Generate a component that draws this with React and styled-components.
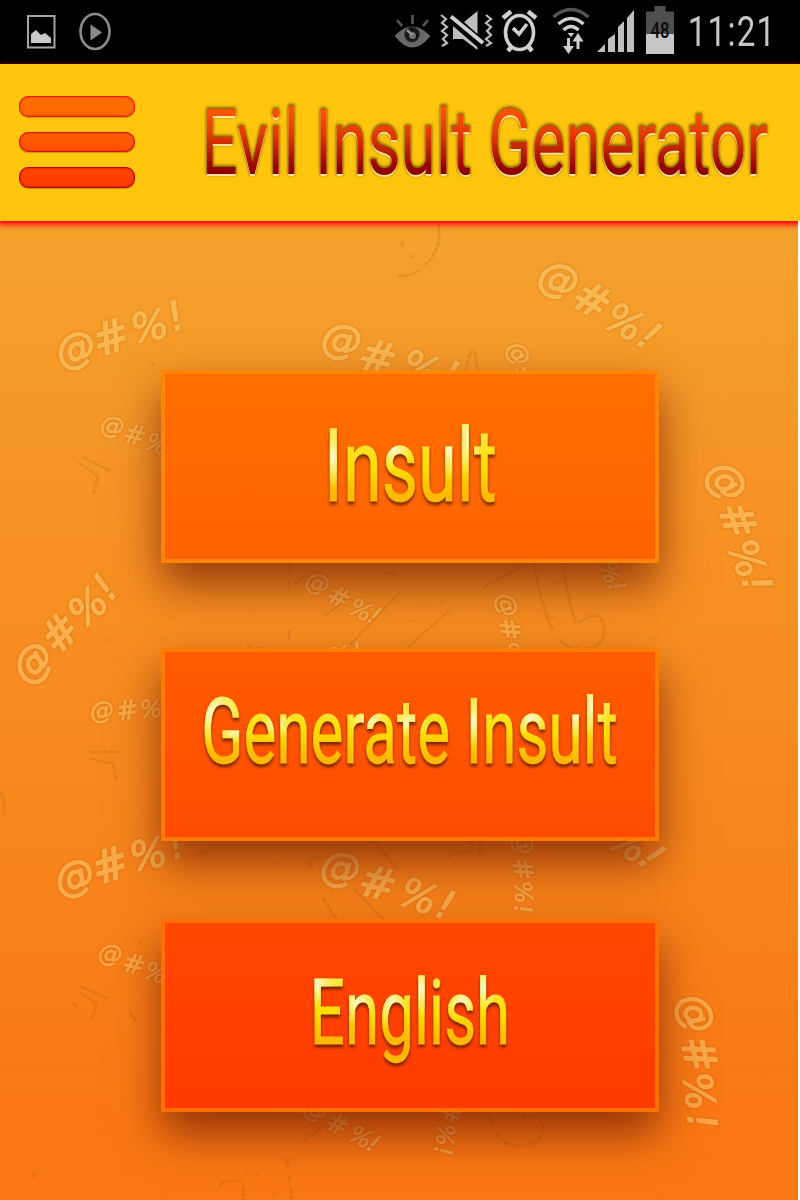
import React from 'react';
import styled, { createGlobalStyle } from 'styled-components';

const GlobalStyle = createGlobalStyle`
  * { box-sizing: border-box; }
  body { margin: 0; background: #fff; }
`;

const Screen = styled.div`
  position: relative;
  z-index: 0;
  width: 800px;
  height: 1200px;
  overflow: hidden;
  display: flex;
  flex-direction: column;
  font-family: Roboto, 'Liberation Sans', sans-serif;
  background: linear-gradient(#f4a22d 220px, #f79325 500px, #f7861c 820px, #fa7814 1120px, #f97813 1200px);
`;

const StatusBar = styled.header`
  height: 64px;
  flex: none;
  display: flex;
  justify-content: space-between;
  background: #000;
`;

const StatusGroup = styled.div`
  display: flex;
`;

const StatusIcons = styled.svg`
  display: block;
  flex: none;
`;

const Clock = styled.div`
  width: 112px;
  display: flex;
  justify-content: center;
  align-items: center;
  color: #c6c6c6;
  font-size: 42px;
  line-height: 64px;
  padding: 0 24px 0 0;
`;

const ClockText = styled.span`
  flex: none;
  font-weight: 400;
  letter-spacing: 1.5px;
  transform: scaleX(0.79);
`;

const AppBar = styled.div`
  position: relative;
  height: 157px;
  flex: none;
  display: flex;
  align-items: center;
  padding: 0 0 1px 19px;
  background: #ffc60d;
  box-shadow: 0 3px 6px 1px #ff1212, 0 2px 2px #f92210;
`;

const MenuButton = styled.button`
  width: 116px;
  padding: 0;
  border: 0;
  background: none;
  display: flex;
  flex-direction: column;
  gap: 15px;
  flex: none;
`;

const MenuBar = styled.span`
  height: 20.5px;
  border-radius: 9px;
  border: 1px solid ${(p) => p.$edge};
  background: linear-gradient(${(p) => p.$from}, ${(p) => p.$to});
  box-shadow: inset 0 0 2px ${(p) => p.$edge}, 0 1px 1px rgba(150, 90, 0, 0.45);
`;

const TitleBox = styled.h1`
  margin: 1px 0 0 35px;
  width: 630px;
  display: flex;
  justify-content: center;
  filter: drop-shadow(0 2px 0.4px #ffe39a) drop-shadow(0 -1px 1px rgba(110, 85, 0, 0.8))
    drop-shadow(0 -1px 1.5px rgba(120, 95, 0, 0.7));
`;

const TitleText = styled.span`
  flex: none;
  white-space: nowrap;
  font-weight: 400;
  font-size: 91.5px;
  line-height: 110px;
  color: transparent;
  background: linear-gradient(#ff5500 20%, #e23b00 42%, #8f0000 75%);
  background-clip: text;
  -webkit-background-clip: text;
  transform: scaleX(0.698);
`;

const Actions = styled.main`
  padding: 149px 0 0 161px;
  display: flex;
  flex-direction: column;
  align-items: flex-start;
`;

const ActionButton = styled.button`
  width: 498px;
  height: 193px;
  margin: 0 0 ${(p) => p.$after}px;
  padding: 4px;
  border: 0;
  display: flex;
  font-family: inherit;
  background: ${(p) => p.$edge};
  box-shadow: 0 22px 42px rgba(110, 24, 0, 0.72);
`;

const Face = styled.span`
  flex: 1;
  height: 185px;
  min-width: 0;
  display: flex;
  justify-content: center;
  align-items: center;
  padding-bottom: ${(p) => p.$lift}px;
  background: linear-gradient(${(p) => p.$from}, ${(p) => p.$to});
`;

const LabelBox = styled.span`
  width: 480px;
  display: flex;
  justify-content: center;
  filter: drop-shadow(0 3px 1.5px rgba(80, 25, 0, 0.75));
`;

const Label = styled.span`
  flex: none;
  white-space: nowrap;
  font-size: ${(p) => p.$size}px;
  line-height: 1.2;
  color: transparent;
  background: ${(p) => p.$glints
    .map(([x, y, w, h]) => `radial-gradient(${w}% ${h}% at ${x}% ${y}%, #fff8d0 0%, rgba(255,240,120,0.7) 55%, rgba(255,225,0,0) 100%)`)
    .join(', ')}, linear-gradient(#ffe640 22%, #ffde00 50%, #ffb700 75%);
  background-clip: text;
  -webkit-background-clip: text;
  -webkit-text-stroke: 0.8px transparent;
  transform: scaleX(${(p) => p.$narrow});
`;

const Backdrop = styled.svg`
  position: absolute;
  left: 0;
  top: 0;
  z-index: -1;
  pointer-events: none;
`;

const CurseGroup = styled.g`
  opacity: ${(p) => p.$strength};
  filter: drop-shadow(0 0 1px rgba(150, 60, 0, 0.9));
`;

const Curse = styled.text`
  font-family: 'DejaVu Sans', sans-serif;
  font-style: italic;
  font-size: ${(p) => p.$size}px;
  fill: #fdd277;
  stroke: #fdd277;
  stroke-width: ${(p) => p.$size * 0.04}px;
  stroke-linejoin: round;
  text-anchor: middle;
`;

const RightEdge = styled.div`
  position: absolute;
  right: 0;
  top: 221px;
  bottom: 0;
  width: 2px;
  background: #fff;
`;

// Each entry: font size followed by [index in "@#%!", centre x, centre y, angle]
const curses = [
  [40, [0, 76, 351, -20], [1, 111, 337, -18], [2, 149, 325, -10], [3, 175, 315, -20]],
  [40, [0, 558, 281, 20], [1, 592, 300, 30], [2, 625, 321, 28], [3, 650, 335, 35]],
  [40, [0, 341, 342, 8], [1, 378, 357, 15], [2, 421, 367, 20], [3, 450, 374, 20]],
  [24, [0, 112, 427, 8], [1, 135, 435, 14], [2, 157, 443, 20]],
  [40, [0, 725, 482, 50], [1, 738, 520, 72], [2, 748, 558, 68], [3, 758, 583, 78]],
  [40, [0, 34, 664, -45], [1, 60, 633, -45], [2, 87, 606, -40], [3, 104, 586, -48]],
  [24, [0, 102, 712, -8], [1, 127, 710, -6], [2, 151, 708, -2]],
  [24, [0, 317, 584, 20], [1, 339, 597, 25], [2, 361, 609, 28], [3, 375, 615, 30]],
  [24, [2, 339, 655, -8], [3, 357, 651, -10]],
  [24, [0, 506, 605, 70], [1, 510, 629, 80], [2, 511, 653, 80]],
  [24, [0, 517, 354, 50], [1, 523, 376, 65]],
  [24, [2, 611, 572, 70], [3, 618, 586, 72]],
  [40, [0, 75, 879, -20], [1, 110, 865, -18], [2, 148, 853, -10], [3, 175, 843, -20]],
  [40, [0, 340, 870, 8], [1, 378, 883, 15], [2, 419, 895, 20], [3, 446, 904, 20]],
  [24, [0, 110, 955, 8], [1, 134, 964, 14], [2, 156, 972, 20]],
  [24, [0, 522, 843, 65], [1, 523, 869, 80], [2, 524, 892, 85], [3, 524, 909, 86]],
  [40, [2, 629, 842, 30], [3, 653, 856, 45]],
  [40, [0, 694, 1014, 65], [1, 699, 1054, 78], [2, 700, 1091, 82], [3, 703, 1121, 85]],
  [24, [0, 315, 1111, 20], [1, 338, 1124, 25], [2, 361, 1136, 28], [3, 374, 1143, 30]],
  [24, [1, 450, 1112, 100], [2, 446, 1135, 95], [3, 444, 1151, 94]],
];

const scratches = [
  'M428 208l2 3M437 217q8 30-12 48M420 270q-10 6-22 6M401 246l3-4M412 258l2-3',
  'M83 457L110 471M79 463L98 476L93 495M151 365l3-1M592 348v1',
  'M466 371q3-22 8-20M475 352l3 21',
  'M290 563v10M289 579v13M289 630v12M293 585L310 572M325 616L345 600M350 645L400 592',
  'M247 647h3M256 648h5M277 631h1M107 640h2M407 648L450 610M386 575q5-6 8 2M411 620v2M423 605h2M441 602h3',
  'M483 588L533 560M534 563Q541 605 553 630M562 563Q568 600 576 623M552 617v2M578 623Q600 608 604 625Q607 649 580 649Q564 647 558 638M557 582l2 3',
  'M90 752H122M90 758Q100 762 113 763L116 780M0 793Q6 796 4 814',
  'M374 841L398 870M330 846h8M312 868q-8-12 8-10M197 855l10-4M278 865l3-2M323 898L338 922M354 889L385 921M150 893h2',
  'M80 986L109 999M78 991L97 1004L91 1020M73 1003l4 4M130 1012l6 10M139 940l2 4',
  'M448 857q10-6 23-5V837M480 837V861M595 856h2',
  'M303 1142L325 1124M288 1110v10M288 1157v12M289 1176v7M291 1188v12M221 1187v-6h21M243 1186v14M34 1172v6M276 1159v1M246 1174h2M256 1175h2M268 1175h2M272 1194h2',
  'M489 1110q0 12 4 15M496 1133Q506 1147 520 1146Q544 1144 543 1126Q538 1112 519 1118',
];

const actions = [
  { label: 'Insult', size: 102.7, narrow: 0.685, lift: 0, after: 85, from: '#ff6e00', to: '#ff6200', edge: 'rgba(255, 130, 0, 0.86)',
    glints: [[5, 42, 9, 25], [40, 36, 12, 18], [73, 36, 9, 26], [84, 28, 8, 34]] },
  { label: 'Generate Insult', size: 91.5, narrow: 0.677, lift: 26, after: 78, from: '#ff5c00', to: '#ff4b00', edge: 'rgba(255, 120, 0, 0.86)',
    glints: [[3, 33, 7, 30], [8, 50, 4, 12], [18, 43, 4, 15], [40, 39, 5, 18], [50, 42, 5, 14], [65, 41, 4, 24], [79, 38, 5, 16], [90, 35, 4, 24], [94, 27, 4, 30]] },
  { label: 'English', size: 91.5, narrow: 0.677, lift: 5, after: 0, from: '#ff4800', to: '#ff3a00', edge: 'rgba(255, 110, 0, 0.86)',
    glints: [[3, 24, 10, 20], [24, 40, 10, 20], [41, 42, 8, 24], [56, 28, 8, 26], [76, 40, 9, 16], [87, 27, 7, 22]] },
];

function Doodles() {
  return (
    <Backdrop width="800" height="1200" viewBox="0 0 800 1200" aria-hidden="true">
      <g fill="none" stroke="rgba(130,70,10,0.17)" strokeWidth="2.6" strokeDasharray="6 1 4 1">
        {scratches.map((d) => <path key={d} d={d} />)}
      </g>
      {curses.map(([size, ...marks]) => (
        <CurseGroup key={`${marks[0][1]}-${marks[0][2]}`} $strength={size > 30 ? 0.5 : 0.45}>
          {marks.map(([i, x, y, r]) => (
            <Curse key={i} $size={i === 1 ? size * 1.1 : size} transform={`translate(${x} ${y}) rotate(${r})`} y={size * (i === 0 ? 0.28 : 0.38)}>
              {'@#%!'[i]}
            </Curse>
          ))}
        </CurseGroup>
      ))}
    </Backdrop>
  );
}

function LeftIcons() {
  return (
    <StatusIcons width="130" height="64" viewBox="0 0 130 64">
      <rect x="28" y="16" width="26.500" height="31.500" fill="none" stroke="#a4a4a4" strokeWidth="2" />
      <path d="M31 43V34l5-4 5 5 4-2 6 5v5z" fill="#c8c8c8" />
      <ellipse cx="95" cy="31.500" rx="14.500" ry="17.500" fill="none" stroke="#8c8c8c" strokeWidth="2.600" />
      <path d="M90.500 24.500v16l11.500-8z" fill="#8c8c8c" />
    </StatusIcons>
  );
}

function RightIcons() {
  return (
    <StatusIcons width="298" height="64" viewBox="390 0 298 64">
      <g fill="none" stroke="#585858" strokeWidth="2.600">
        <path d="M396 36Q412 19 429 36Q412 57 396 36Z" fill="#686868" stroke="#686868" strokeWidth="2" />
        <circle cx="412" cy="34.500" r="7" fill="#161616" stroke="#222" strokeWidth="1.500" />
        <circle cx="412.500" cy="35.500" r="3.500" fill="#707070" stroke="none" />
        <path d="M412.500 35L407 30" stroke="#909090" />
        <path d="M412.500 15v9M397 20l5 6M428 20l-5 6" />
      </g>
      <g fill="none" stroke="#bdbdbd" strokeWidth="2.200">
        <path d="M441 15l5 4-4 4 5 4-5 4 5 4-4 4 4 4-5 3M486 15l5 4-5 4 5 4-4 4 4 4-5 4 5 4-5 3" />
        <path d="M464 22l13.500-11v23zM453 25v14h10L477.500 50v-3L453 26z" fill="#bdbdbd" stroke="none" />
        <path d="M451 16.500L483 43" stroke="#d0d0d0" strokeWidth="4" />
      </g>
      <g fill="none" stroke="#d0d0d0" strokeWidth="3.600">
        <ellipse cx="519.500" cy="32.500" rx="14" ry="17" />
        <path d="M513 28l6 6 8-10" />
        <path d="M503 18l8-6.500M536 18l-8-6.500M508 51l4-5M532 51l-4-5" strokeWidth="4.500" />
      </g>
      <g fill="none" stroke="#cecece" strokeWidth="3.500">
        <path d="M553.500 17Q571 2 588.500 17" stroke="#555" />
        <path d="M558.500 24Q571 13 583.500 24M563.500 30Q571 23 578.500 30" />
        <path d="M567.500 33h7l-3.500 4z" fill="#cecece" stroke="none" />
        <path d="M568.500 38v10M578 49V39" strokeWidth="3" />
        <path d="M563 46h11l-5.500 8zM572.500 41.500h11L578 33z" fill="#cecece" stroke="none" />
      </g>
      <path d="M597 52l8-8v8zM608 52V39l7-5v18zM618 52V27l6-6v31zM627 52V18l7-8v42z" fill="#bfbfbf" />
      <path d="M654.500 6h11v5.500H674V34H646V11.500h8.500z" fill="#4f4f4f" />
      <path d="M646 34h28v20H646z" fill="#c6c6c6" />
      <text transform="translate(660 38.300) scale(.74 1)" textAnchor="middle" fontFamily="Roboto, sans-serif" fontWeight="500" fontSize="22.500" fill="#0a0a0a">48</text>
    </StatusIcons>
  );
}

export default function App() {
  return (
    <>
      <GlobalStyle />
      <Screen>
        <StatusBar>
          <LeftIcons />
          <StatusGroup>
            <RightIcons />
            <Clock><ClockText>11:21</ClockText></Clock>
          </StatusGroup>
        </StatusBar>
        <AppBar>
          <MenuButton aria-label="Menu">
            <MenuBar $from="#ff6d00" $to="#ff6700" $edge="#ea1800" />
            <MenuBar $from="#ff5d00" $to="#ff4f00" $edge="#d01400" />
            <MenuBar $from="#ff4400" $to="#ff3800" $edge="#b00800" />
          </MenuButton>
          <TitleBox><TitleText>Evil Insult Generator</TitleText></TitleBox>
        </AppBar>
        <Actions>
          {actions.map((a) => (
            <ActionButton key={a.label} $edge={a.edge} $after={a.after}>
              <Face $from={a.from} $to={a.to} $lift={a.lift}>
                <LabelBox>
                  <Label $size={a.size} $narrow={a.narrow} $glints={a.glints}>{a.label}</Label>
                </LabelBox>
              </Face>
            </ActionButton>
          ))}
        </Actions>
        <Doodles />
        <RightEdge />
      </Screen>
    </>
  );
}
